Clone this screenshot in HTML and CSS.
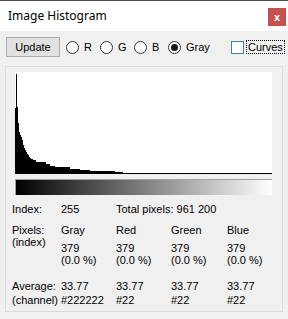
FILE: index.html
```html
<!DOCTYPE html>
<html lang="en">
<head>
    <meta charset="UTF-8">
    <meta name="viewport" content="width=device-width, initial-scale=1.0">
    <title>Image Histogram</title>
    <link rel="stylesheet" href="styles.css">
</head>
<body>
    <div class="window">
        <div class="titlebar">
            <span class="title">Image Histogram</span>
            <span class="close">x</span>
        </div>

        <div class="toolbar">
            <button class="update">Update</button>
            <label class="radio"><span class="circle"></span>R</label>
            <label class="radio"><span class="circle"></span>G</label>
            <label class="radio"><span class="circle"></span>B</label>
            <label class="radio gray"><span class="circle on"></span>Gray</label>
            <label class="check"><span class="box"></span><span class="focus">Curves</span></label>
        </div>

        <div class="group">
            <div class="plot">
                <svg width="257" height="102" viewBox="0 0 257 102" shape-rendering="crispEdges">
                    <path fill="#000" d="M0 102V36H1V2H2V35H3V51H4V60H5V63H6V65H7V68H8V73H9V76H10V78H11V80H12V82H13V83H14V85H15V86H16V87H18V88H21V90H31V92H35V94H40V95H55V97H65V98H75V99H100V100H108V102Z"/>
                    <rect x="0" y="101" width="257" height="1" fill="#000"/>
                </svg>
            </div>
            <div class="ramp"></div>

            <!-- readout table -->
            <div class="info">
                <div>Index:</div>
                <div>255</div>
                <div class="wide">Total pixels: 961 200</div>

                <div class="label">Pixels:<br>(index)</div>
                <div class="val"><div class="head">Gray</div><div>379</div><div>(0.0 %)</div></div>
                <div class="val"><div class="head">Red</div><div>379</div><div>(0.0 %)</div></div>
                <div class="val"><div class="head">Green</div><div>379</div><div>(0.0 %)</div></div>
                <div class="val"><div class="head">Blue</div><div>379</div><div>(0.0 %)</div></div>

                <div class="avg">Average:<br>(channel)</div>
                <div class="avg">33.77<br>#222222</div>
                <div class="avg">33.77<br>#22</div>
                <div class="avg">33.77<br>#22</div>
                <div class="avg">33.77<br>#22</div>
            </div>
        </div>
    </div>
</body>
</html>
```

FILE: styles.css
```css
body {
    margin: 0;
    background-color: #f0f0f0;
    font-family: "Liberation Sans", Arial, sans-serif;
    font-size: 11px;
    color: #000;
}
.window {
    height: 319px;
    border-top: 1px solid #4b4b4b;
    box-sizing: border-box;
}
.titlebar {
    height: 30px;
    background-color: #fff;
    display: flex;
    justify-content: space-between;
    align-items: center;
    padding-left: 8px;
}
.title {
    font-family: "Noto Sans", sans-serif;
    font-size: 12px;
    margin-top: -2px;
}
.close {
    width: 18px;
    height: 18px;
    margin-right: 2px;
    margin-top: 2px;
    background-color: #c75050;
    color: #fff;
    font-weight: bold;
    font-size: 11px;
    display: flex;
    justify-content: center;
    align-items: center;
}
.toolbar {
    display: flex;
    align-items: center;
    padding: 6px 0 0 6px;
    height: 20px;
}
.update {
    width: 54px;
    height: 20px;
    margin: 0;
    padding: 0;
    background-color: #e1e1e1;
    border: 1px solid #adadad;
    font-family: "Liberation Sans", Arial, sans-serif;
    font-size: 11px;
    color: #000;
    margin-right: 6px;
}
.radio {
    width: 34px;
    display: flex;
    align-items: center;
}
.radio.gray {
    width: 63px;
}
.circle {
    width: 11px;
    height: 11px;
    border: 1px solid #333;
    border-radius: 50%;
    background-color: #fff;
    margin-right: 5px;
    display: flex;
    justify-content: center;
    align-items: center;
}
.circle.on::after {
    content: "";
    width: 7px;
    height: 7px;
    border-radius: 50%;
    background-color: #1a1a1a;
}
.check {
    display: flex;
    align-items: center;
}
.box {
    width: 11px;
    height: 11px;
    border: 1px solid #3d7fbf;
    background-color: #fff;
    margin-right: 2px;
}
.focus {
    border: 1px dotted #000;
    padding: 0 1px;
    line-height: 12px;
}
.group {
    margin: 9px 5px 0 5px;
    border: 1px solid #dcdcdc;
    padding: 5px 0 4px 9px;
}
.plot {
    width: 257px;
    height: 102px;
    background-color: #fff;
}
.plot svg {
    display: block;
}
.ramp {
    width: 256px;
    height: 15px;
    margin-top: 5px;
    border-top: 1px solid #a0a0a0;
    border-left: 1px solid #a0a0a0;
    background: linear-gradient(to right, #000, #fff);
}
.info {
    display: grid;
    grid-template-columns: 49px 55px 55px 56px 1fr;
    margin: 8px 0 0 -3px;
    line-height: 12px;
}
.info .wide {
    grid-column: span 3;
}
.label,
.val {
    margin-top: 9px;
}
.val .head {
    margin-bottom: 6px;
}
.avg {
    margin-top: 13px;
    line-height: 14px;
}
```
